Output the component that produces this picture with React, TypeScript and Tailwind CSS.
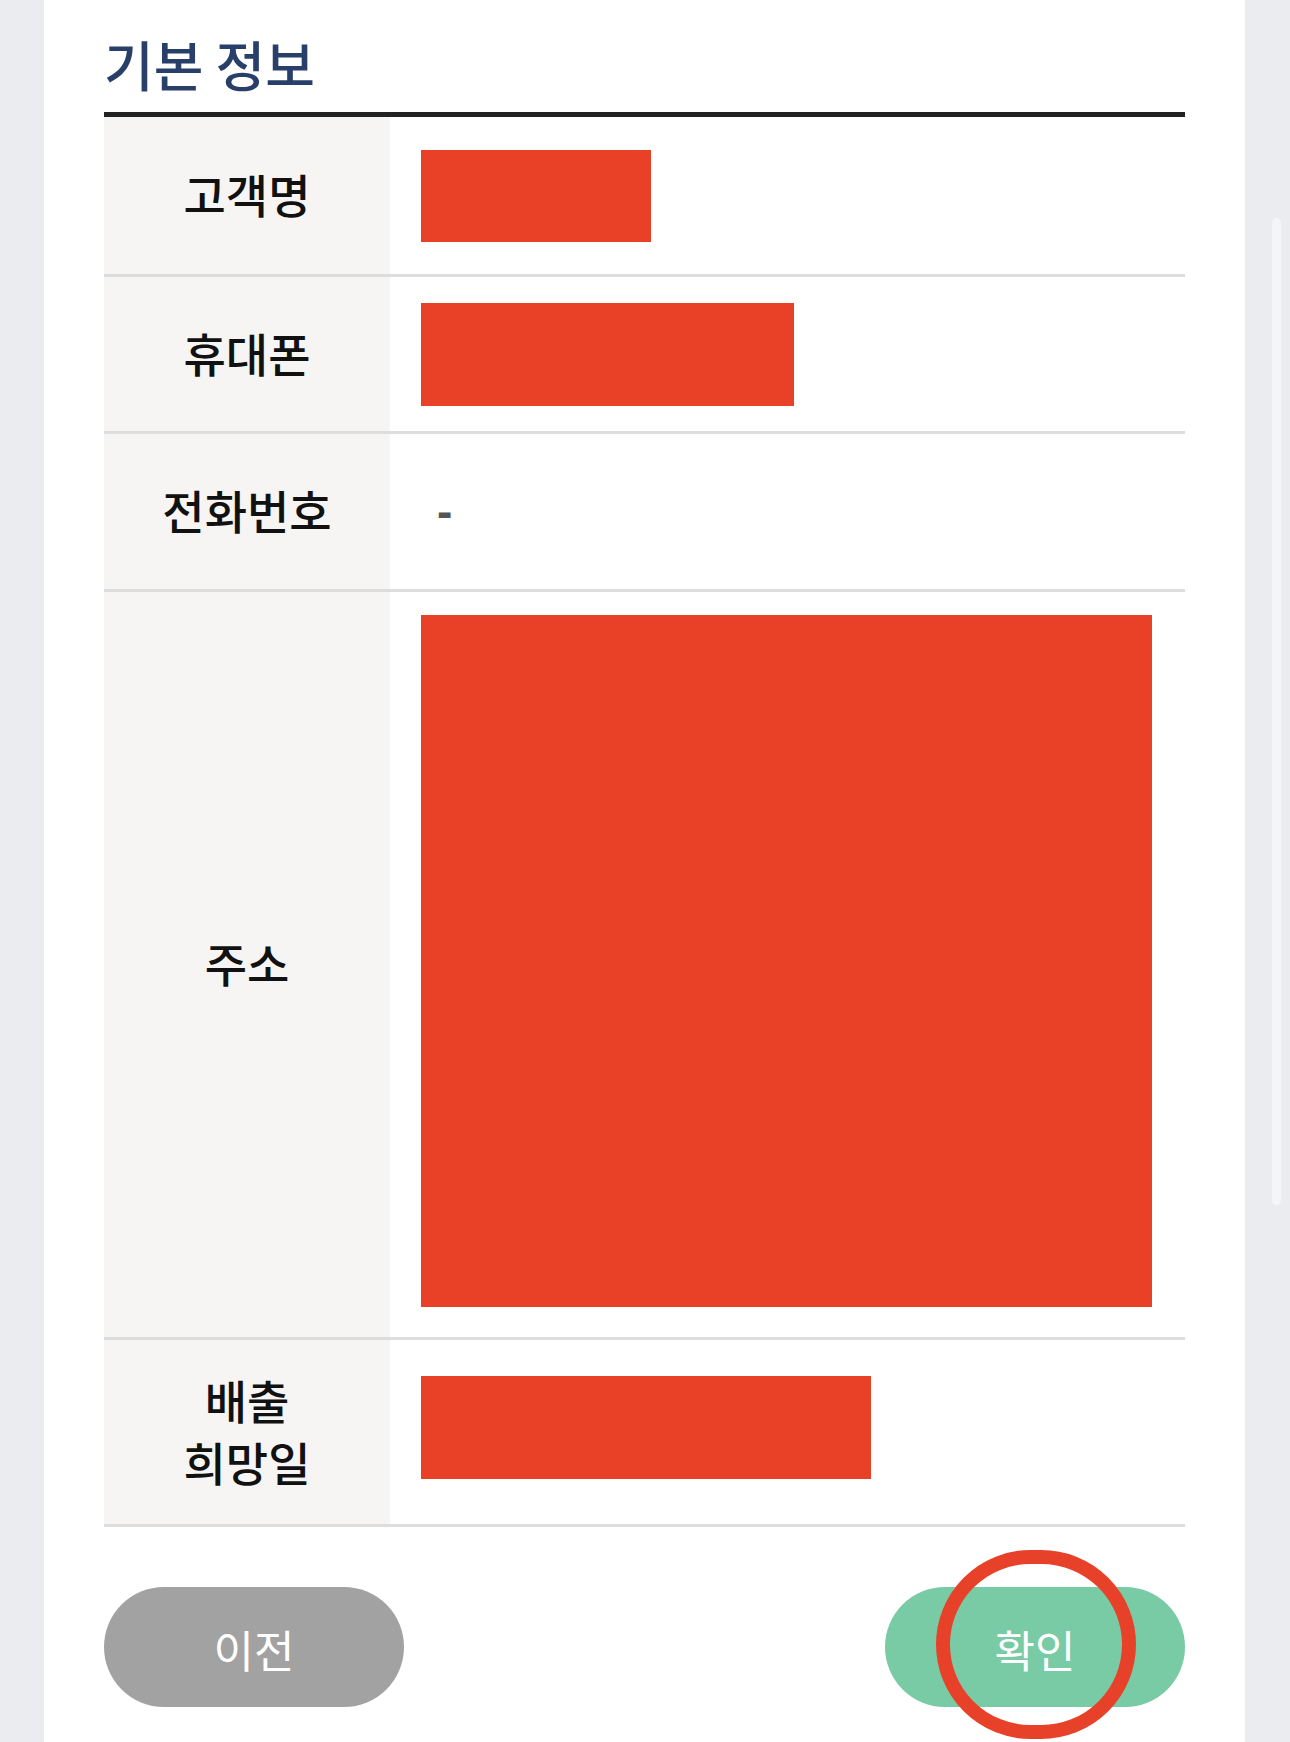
const font = { fontFamily: '"Noto Sans CJK KR", "Noto Sans", sans-serif' };

interface Row {
  label: string[];
  height: string;
  value: React.ReactNode;
}

const Redacted = ({ className }: { className: string }) => (
  <div className={`bg-[#e84128] ${className}`} />
);

const rows: Row[] = [
  { label: ["고객명"], height: "h-[160px]", value: <Redacted className="w-[230px] h-[92px]" /> },
  { label: ["휴대폰"], height: "h-[157px]", value: <Redacted className="w-[373px] h-[103px]" /> },
  {
    label: ["전화번호"],
    height: "h-[158px]",
    value: (
      <span
        className="pl-[16px] text-[46px] font-bold text-[#555]"
        style={{ fontFamily: '"Liberation Sans", sans-serif' }}
      >
        -
      </span>
    ),
  },
  { label: ["주소"], height: "h-[748px]", value: <Redacted className="w-[731px] h-[692px] -mt-[8px]" /> },
  {
    label: ["배출", "희망일"],
    height: "h-[187px]",
    value: <Redacted className="w-[450px] h-[103px] -mt-[9px]" />,
  },
];

const InfoRow = ({ row }: { row: Row }) => (
  <div className={`flex border-b-[3px] border-[#dddddd] ${row.height}`}>
    <div className="flex w-[286px] shrink-0 flex-col items-center justify-center bg-[#f6f5f4] pb-[5px] text-[46px] font-medium leading-[62px] text-[#111]">
      {row.label.map((l) => (
        <span key={l}>{l}</span>
      ))}
    </div>
    <div className="flex flex-1 items-center pl-[31px]">{row.value}</div>
  </div>
);

export default function App() {
  return (
    <div className="flex h-[1742px] overflow-hidden bg-[#ebecf0]" style={font}>
      <div className="w-[44px] shrink-0" />
      <main className="w-[1201px] shrink-0 bg-white px-[60px]">
        <h2 className="pt-[32px] pb-[16px] text-[54px] font-medium leading-[64px] text-[#283f6a]">
          기본 정보
        </h2>
        <div className="border-t-[5px] border-[#222]">
          {rows.map((r) => (
            <InfoRow key={r.label.join("")} row={r} />
          ))}
        </div>
        <div className="mt-[60px] flex justify-between">
          <button className="flex h-[120px] w-[300px] items-center justify-center rounded-full bg-[#a2a2a2] pt-[4px] text-[44px] text-white">
            이전
          </button>
          <div className="relative">
            <button className="flex h-[120px] w-[300px] items-center justify-center rounded-full bg-[#79cba5] pt-[4px] text-[44px] text-white">
              확인
            </button>
            <span className="pointer-events-none absolute left-[51px] top-[-37px] h-[189px] w-[200px] rounded-full border-[14px] border-[#e8412a]" />
          </div>
        </div>
      </main>
      <div className="flex-1 pl-[27px] pt-[218px]">
        <div className="h-[987px] w-[9px] rounded-full bg-[#f5f5f7]" />
      </div>
    </div>
  );
}
